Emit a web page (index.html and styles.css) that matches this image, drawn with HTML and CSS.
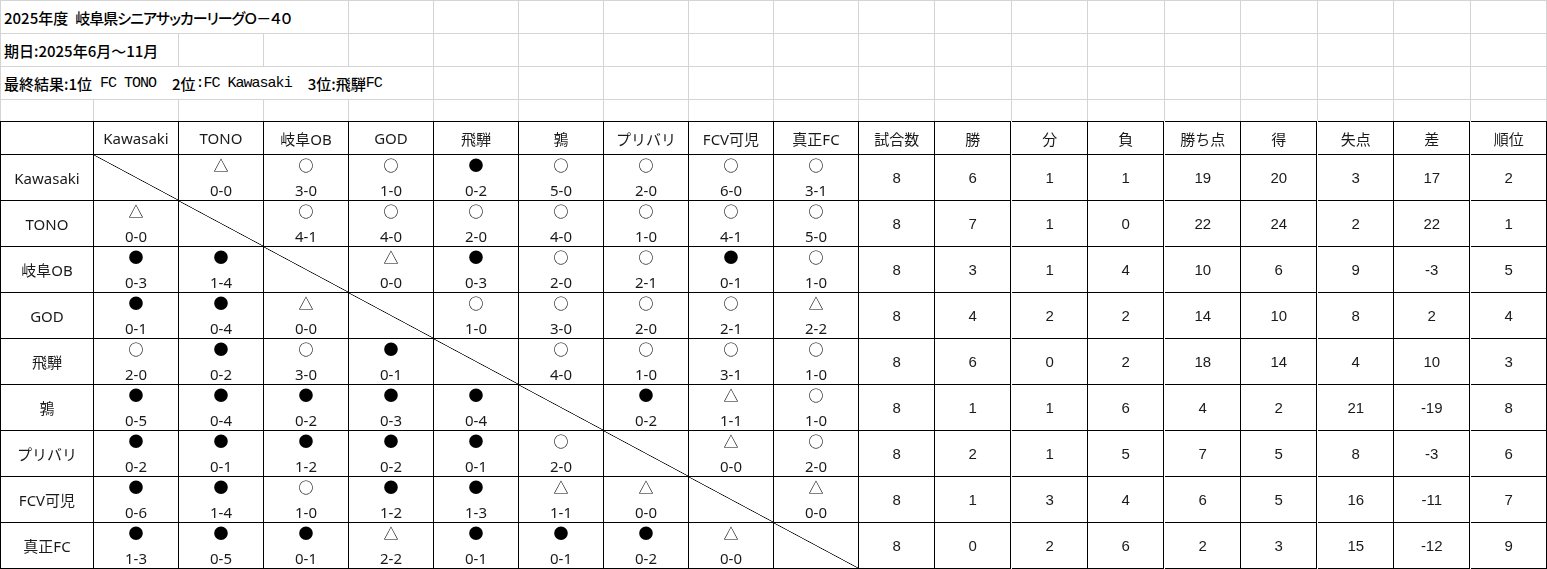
FILE: index.html
```html
<!DOCTYPE html>
<html lang="ja">
<head>
<meta charset="utf-8">
<title>2025年度 岐阜県シニアサッカーリーグO-40</title>
<link rel="stylesheet" href="styles.css">
</head>
<body>
<div class="sheet">
  <div class="grid top">
    <div class="c r1 first span4 txt">2025年度<span class="prop">岐阜県シニアサッカーリーグＯ－４０</span></div>
    <div class="c r1"></div><div class="c r1"></div><div class="c r1"></div><div class="c r1"></div><div class="c r1"></div>
    <div class="c r1"></div><div class="c r1"></div><div class="c r1"></div><div class="c r1"></div><div class="c r1"></div>
    <div class="c r1"></div><div class="c r1"></div><div class="c r1"></div><div class="c r1"></div><div class="c r1"></div>

    <div class="c first span2 txt">期日:2025年6月～11月</div>
    <div class="c"></div><div class="c"></div><div class="c"></div><div class="c"></div><div class="c"></div><div class="c"></div>
    <div class="c"></div><div class="c"></div><div class="c"></div><div class="c"></div><div class="c"></div><div class="c"></div>
    <div class="c"></div><div class="c"></div><div class="c"></div><div class="c"></div><div class="c"></div>

    <div class="c first span5 txt result">最終結果:1位<span class="lat"> FC TONO  </span>2位<span class="lat">:FC Kawasaki  </span>3位:飛騨<span class="lat">FC</span></div>
    <div class="c"></div><div class="c"></div><div class="c"></div><div class="c"></div><div class="c"></div><div class="c"></div><div class="c"></div>
    <div class="c"></div><div class="c"></div><div class="c"></div><div class="c"></div><div class="c"></div><div class="c"></div><div class="c"></div>

    <div class="c r4 first"></div><div class="c r4"></div><div class="c r4"></div><div class="c r4"></div><div class="c r4"></div>
    <div class="c r4"></div><div class="c r4"></div><div class="c r4"></div><div class="c r4"></div><div class="c r4"></div>
    <div class="c r4"></div><div class="c r4"></div><div class="c r4"></div><div class="c r4"></div><div class="c r4"></div>
    <div class="c r4"></div><div class="c r4"></div><div class="c r4"></div><div class="c r4"></div>
  </div>

  <div class="grid league">
    <!-- header -->
    <div class="c h l"></div>
    <div class="c h">Kawasaki</div>
    <div class="c h">TONO</div>
    <div class="c h">岐阜OB</div>
    <div class="c h">GOD</div>
    <div class="c h">飛騨</div>
    <div class="c h">鶉</div>
    <div class="c h">プリバリ</div>
    <div class="c h">FCV可児</div>
    <div class="c h">真正FC</div>
    <div class="c h">試合数</div>
    <div class="c h">勝</div>
    <div class="c h">分</div>
    <div class="c h">負</div>
    <div class="c h">勝ち点</div>
    <div class="c h">得</div>
    <div class="c h">失点</div>
    <div class="c h">差</div>
    <div class="c h">順位</div>

    <!-- Kawasaki -->
    <div class="c l team">Kawasaki</div>
    <div class="c d"></div>
    <div class="c m"><span class="sym">△</span><span class="sc">0-0</span></div>
    <div class="c m"><span class="sym">○</span><span class="sc">3-0</span></div>
    <div class="c m"><span class="sym">○</span><span class="sc">1-0</span></div>
    <div class="c m"><span class="sym">●</span><span class="sc">0-2</span></div>
    <div class="c m"><span class="sym">○</span><span class="sc">5-0</span></div>
    <div class="c m"><span class="sym">○</span><span class="sc">2-0</span></div>
    <div class="c m"><span class="sym">○</span><span class="sc">6-0</span></div>
    <div class="c m"><span class="sym">○</span><span class="sc">3-1</span></div>
    <div class="c n">8</div><div class="c n">6</div><div class="c n">1</div><div class="c n">1</div><div class="c n">19</div><div class="c n">20</div><div class="c n">3</div><div class="c n">17</div><div class="c n">2</div>

    <!-- TONO -->
    <div class="c l team">TONO</div>
    <div class="c m"><span class="sym">△</span><span class="sc">0-0</span></div>
    <div class="c d"></div>
    <div class="c m"><span class="sym">○</span><span class="sc">4-1</span></div>
    <div class="c m"><span class="sym">○</span><span class="sc">4-0</span></div>
    <div class="c m"><span class="sym">○</span><span class="sc">2-0</span></div>
    <div class="c m"><span class="sym">○</span><span class="sc">4-0</span></div>
    <div class="c m"><span class="sym">○</span><span class="sc">1-0</span></div>
    <div class="c m"><span class="sym">○</span><span class="sc">4-1</span></div>
    <div class="c m"><span class="sym">○</span><span class="sc">5-0</span></div>
    <div class="c n">8</div><div class="c n">7</div><div class="c n">1</div><div class="c n">0</div><div class="c n">22</div><div class="c n">24</div><div class="c n">2</div><div class="c n">22</div><div class="c n">1</div>

    <!-- 岐阜OB -->
    <div class="c l team">岐阜OB</div>
    <div class="c m"><span class="sym">●</span><span class="sc">0-3</span></div>
    <div class="c m"><span class="sym">●</span><span class="sc">1-4</span></div>
    <div class="c d"></div>
    <div class="c m"><span class="sym">△</span><span class="sc">0-0</span></div>
    <div class="c m"><span class="sym">●</span><span class="sc">0-3</span></div>
    <div class="c m"><span class="sym">○</span><span class="sc">2-0</span></div>
    <div class="c m"><span class="sym">○</span><span class="sc">2-1</span></div>
    <div class="c m"><span class="sym">●</span><span class="sc">0-1</span></div>
    <div class="c m"><span class="sym">○</span><span class="sc">1-0</span></div>
    <div class="c n">8</div><div class="c n">3</div><div class="c n">1</div><div class="c n">4</div><div class="c n">10</div><div class="c n">6</div><div class="c n">9</div><div class="c n">-3</div><div class="c n">5</div>

    <!-- GOD -->
    <div class="c l team">GOD</div>
    <div class="c m"><span class="sym">●</span><span class="sc">0-1</span></div>
    <div class="c m"><span class="sym">●</span><span class="sc">0-4</span></div>
    <div class="c m"><span class="sym">△</span><span class="sc">0-0</span></div>
    <div class="c d"></div>
    <div class="c m"><span class="sym">○</span><span class="sc">1-0</span></div>
    <div class="c m"><span class="sym">○</span><span class="sc">3-0</span></div>
    <div class="c m"><span class="sym">○</span><span class="sc">2-0</span></div>
    <div class="c m"><span class="sym">○</span><span class="sc">2-1</span></div>
    <div class="c m"><span class="sym">△</span><span class="sc">2-2</span></div>
    <div class="c n">8</div><div class="c n">4</div><div class="c n">2</div><div class="c n">2</div><div class="c n">14</div><div class="c n">10</div><div class="c n">8</div><div class="c n">2</div><div class="c n">4</div>

    <!-- 飛騨 -->
    <div class="c l team">飛騨</div>
    <div class="c m"><span class="sym">○</span><span class="sc">2-0</span></div>
    <div class="c m"><span class="sym">●</span><span class="sc">0-2</span></div>
    <div class="c m"><span class="sym">○</span><span class="sc">3-0</span></div>
    <div class="c m"><span class="sym">●</span><span class="sc">0-1</span></div>
    <div class="c d"></div>
    <div class="c m"><span class="sym">○</span><span class="sc">4-0</span></div>
    <div class="c m"><span class="sym">○</span><span class="sc">1-0</span></div>
    <div class="c m"><span class="sym">○</span><span class="sc">3-1</span></div>
    <div class="c m"><span class="sym">○</span><span class="sc">1-0</span></div>
    <div class="c n">8</div><div class="c n">6</div><div class="c n">0</div><div class="c n">2</div><div class="c n">18</div><div class="c n">14</div><div class="c n">4</div><div class="c n">10</div><div class="c n">3</div>

    <!-- 鶉 -->
    <div class="c l team">鶉</div>
    <div class="c m"><span class="sym">●</span><span class="sc">0-5</span></div>
    <div class="c m"><span class="sym">●</span><span class="sc">0-4</span></div>
    <div class="c m"><span class="sym">●</span><span class="sc">0-2</span></div>
    <div class="c m"><span class="sym">●</span><span class="sc">0-3</span></div>
    <div class="c m"><span class="sym">●</span><span class="sc">0-4</span></div>
    <div class="c d"></div>
    <div class="c m"><span class="sym">●</span><span class="sc">0-2</span></div>
    <div class="c m"><span class="sym">△</span><span class="sc">1-1</span></div>
    <div class="c m"><span class="sym">○</span><span class="sc">1-0</span></div>
    <div class="c n">8</div><div class="c n">1</div><div class="c n">1</div><div class="c n">6</div><div class="c n">4</div><div class="c n">2</div><div class="c n">21</div><div class="c n">-19</div><div class="c n">8</div>

    <!-- プリバリ -->
    <div class="c l team">プリバリ</div>
    <div class="c m"><span class="sym">●</span><span class="sc">0-2</span></div>
    <div class="c m"><span class="sym">●</span><span class="sc">0-1</span></div>
    <div class="c m"><span class="sym">●</span><span class="sc">1-2</span></div>
    <div class="c m"><span class="sym">●</span><span class="sc">0-2</span></div>
    <div class="c m"><span class="sym">●</span><span class="sc">0-1</span></div>
    <div class="c m"><span class="sym">○</span><span class="sc">2-0</span></div>
    <div class="c d"></div>
    <div class="c m"><span class="sym">△</span><span class="sc">0-0</span></div>
    <div class="c m"><span class="sym">○</span><span class="sc">2-0</span></div>
    <div class="c n">8</div><div class="c n">2</div><div class="c n">1</div><div class="c n">5</div><div class="c n">7</div><div class="c n">5</div><div class="c n">8</div><div class="c n">-3</div><div class="c n">6</div>

    <!-- FCV可児 -->
    <div class="c l team">FCV可児</div>
    <div class="c m"><span class="sym">●</span><span class="sc">0-6</span></div>
    <div class="c m"><span class="sym">●</span><span class="sc">1-4</span></div>
    <div class="c m"><span class="sym">○</span><span class="sc">1-0</span></div>
    <div class="c m"><span class="sym">●</span><span class="sc">1-2</span></div>
    <div class="c m"><span class="sym">●</span><span class="sc">1-3</span></div>
    <div class="c m"><span class="sym">△</span><span class="sc">1-1</span></div>
    <div class="c m"><span class="sym">△</span><span class="sc">0-0</span></div>
    <div class="c d"></div>
    <div class="c m"><span class="sym">△</span><span class="sc">0-0</span></div>
    <div class="c n">8</div><div class="c n">1</div><div class="c n">3</div><div class="c n">4</div><div class="c n">6</div><div class="c n">5</div><div class="c n">16</div><div class="c n">-11</div><div class="c n">7</div>

    <!-- 真正FC -->
    <div class="c l team">真正FC</div>
    <div class="c m"><span class="sym">●</span><span class="sc">1-3</span></div>
    <div class="c m"><span class="sym">●</span><span class="sc">0-5</span></div>
    <div class="c m"><span class="sym">●</span><span class="sc">0-1</span></div>
    <div class="c m"><span class="sym">△</span><span class="sc">2-2</span></div>
    <div class="c m"><span class="sym">●</span><span class="sc">0-1</span></div>
    <div class="c m"><span class="sym">●</span><span class="sc">0-1</span></div>
    <div class="c m"><span class="sym">●</span><span class="sc">0-2</span></div>
    <div class="c m"><span class="sym">△</span><span class="sc">0-0</span></div>
    <div class="c d"></div>
    <div class="c n">8</div><div class="c n">0</div><div class="c n">2</div><div class="c n">6</div><div class="c n">2</div><div class="c n">3</div><div class="c n">15</div><div class="c n">-12</div><div class="c n">9</div>
  </div>
</div>
</body>
</html>
```

FILE: styles.css
```css
html, body {
  margin: 0;
  padding: 0;
  background: #ffffff;
}

body {
  font-family: "Noto Sans", "Noto Sans CJK JP", sans-serif;
  color: #1a1a1a;
  width: 1547px;
  overflow: hidden;
}

* {
  box-sizing: border-box;
}

.sheet {
  width: 1547px;
}

.grid {
  display: grid;
  grid-template-columns: 94px repeat(9, 85px) repeat(9, 1fr);
  width: 1547px;
}

/* ---------- top spreadsheet area ---------- */
.top {
  grid-template-rows: 34px 33px 33px 21px;
}

.top .c {
  border-right: 1px solid #d4d4d4;
  border-bottom: 1px solid #d4d4d4;
  min-width: 0;
}

.top .r1 {
  border-top: 1px solid #d4d4d4;
}

.top .r4 {
  border-bottom: none;
}

.top .first {
  border-left: 1px solid #d4d4d4;
}

.span2 { grid-column: span 2; }
.span4 { grid-column: span 4; }
.span5 { grid-column: span 5; }

.txt {
  display: flex;
  align-items: center;
  padding-left: 3px;
  white-space: pre;
  font-family: "Noto Sans CJK JP", sans-serif;
  font-size: 15px;
  font-weight: 500;
  color: #000;
}

.prop {
  margin-left: 7px;
  font-feature-settings: "palt" 1;
  letter-spacing: -1px;
}

.lat {
  font-family: "Liberation Mono", monospace;
  font-size: 15px;
  font-weight: 400;
  letter-spacing: -1px;
  white-space: pre;
}

/* ---------- league table ---------- */
.league {
  grid-template-rows: 34px repeat(9, 46px);
}

.league .c {
  border-right: 1px solid #000;
  border-bottom: 1px solid #000;
  display: flex;
  flex-direction: column;
  align-items: center;
  justify-content: center;
  font-size: 15px;
  white-space: nowrap;
  min-width: 0;
  will-change: transform;
}

.league .h {
  border-top: 1px solid #000;
}

.league .l {
  border-left: 1px solid #000;
}

.team {
  color: #1a1a1a;
}

.league .m {
  justify-content: flex-start;
}

.sym {
  display: block;
  height: 19px;
  line-height: 19px;
  font-family: "Noto Sans CJK JP", sans-serif;
  font-size: 15px;
  color: #000;
}

.sc {
  display: block;
  margin-top: 4px;
  line-height: 24px;
  height: 22px;
}

.league .n {
  font-family: "Liberation Sans", sans-serif;
  font-size: 15px;
}

.league .d {
  background-image: linear-gradient(to top right,
      transparent calc(50% - 0.7px),
      #000 50%,
      transparent calc(50% + 0.7px));
}
```
